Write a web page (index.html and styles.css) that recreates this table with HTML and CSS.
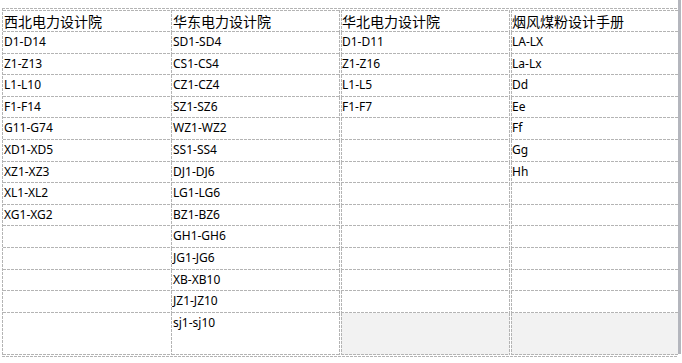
FILE: index.html
```html
<!DOCTYPE html>
<html lang="zh">
<head>
<meta charset="utf-8">
<title>编号表</title>
<link rel="stylesheet" href="styles.css">
</head>
<body>
<div class="page">
  <div class="sheet">
    <div class="grid">
      <div class="cell head c1">西北电力设计院</div>
      <div class="cell head c2">华东电力设计院</div>
      <div class="cell head c3">华北电力设计院</div>
      <div class="cell head c4">烟风煤粉设计手册</div>

      <div class="cell c1">D1-D14</div><div class="cell c2">SD1-SD4</div><div class="cell c3">D1-D11</div><div class="cell c4">LA-LX</div>
      <div class="cell c1">Z1-Z13</div><div class="cell c2">CS1-CS4</div><div class="cell c3">Z1-Z16</div><div class="cell c4">La-Lx</div>
      <div class="cell c1">L1-L10</div><div class="cell c2">CZ1-CZ4</div><div class="cell c3">L1-L5</div><div class="cell c4">Dd</div>
      <div class="cell c1">F1-F14</div><div class="cell c2">SZ1-SZ6</div><div class="cell c3">F1-F7</div><div class="cell c4">Ee</div>
      <div class="cell c1">G11-G74</div><div class="cell c2">WZ1-WZ2</div><div class="cell c3"></div><div class="cell c4">Ff</div>
      <div class="cell c1">XD1-XD5</div><div class="cell c2">SS1-SS4</div><div class="cell c3"></div><div class="cell c4">Gg</div>
      <div class="cell c1">XZ1-XZ3</div><div class="cell c2">DJ1-DJ6</div><div class="cell c3"></div><div class="cell c4">Hh</div>
      <div class="cell c1">XL1-XL2</div><div class="cell c2">LG1-LG6</div><div class="cell c3"></div><div class="cell c4"></div>
      <div class="cell c1">XG1-XG2</div><div class="cell c2">BZ1-BZ6</div><div class="cell c3"></div><div class="cell c4"></div>
      <div class="cell c1"></div><div class="cell c2">GH1-GH6</div><div class="cell c3"></div><div class="cell c4"></div>
      <div class="cell c1"></div><div class="cell c2">JG1-JG6</div><div class="cell c3"></div><div class="cell c4"></div>
      <div class="cell c1"></div><div class="cell c2">XB-XB10</div><div class="cell c3"></div><div class="cell c4"></div>
      <div class="cell c1"></div><div class="cell c2">JZ1-JZ10</div><div class="cell c3"></div><div class="cell c4"></div>
      <div class="cell c1"></div><div class="cell c2">sj1-sj10</div><div class="cell c3 shade"></div><div class="cell c4 shade"></div>
    </div>
  </div>
  <div class="edge"></div>
</div>
</body>
</html>
```
FILE: styles.css
```css
* { box-sizing: border-box; }
html, body { margin: 0; padding: 0; background: #fff; }
:root {
  --h: repeating-linear-gradient(to right, #b4b4b4 0 3px, transparent 3px 4px);
  --v: repeating-linear-gradient(to bottom, #b4b4b4 0 3px, transparent 3px 4px);
}
body {
  font-family: "Noto Sans", "Noto Sans CJK SC", sans-serif;
  font-size: 12px;
  color: #000;
}
.page {
  display: flex;
  align-items: flex-start;
  width: 682px;
  height: 363px;
}
.sheet {
  margin: 8px 0 0 2px;
  padding: 2px 0 2px 1px;
  background:
    var(--h) left top / 100% 1px no-repeat,
    var(--h) left bottom / 100% 1px no-repeat,
    var(--v) left top / 1px 100% no-repeat;
}
.grid {
  display: grid;
  grid-template-columns: 169px 168px 170px 168px;
  grid-template-rows: 22px repeat(13, 21.6px) 42px;
}
.cell {
  padding: 0 0 0 1px;
  line-height: 20px;
  white-space: nowrap;
  overflow: hidden;
  background:
    var(--h) left bottom / 100% 1px no-repeat,
    var(--v) right top / 1px 100% no-repeat;
}
.cell.head {
  padding-top: 1px;
  font-family: "Noto Sans CJK SC", sans-serif;
  font-size: 14px;
  line-height: 20px;
  background:
    var(--h) left top / 100% 1px no-repeat,
    var(--h) left bottom / 100% 1px no-repeat,
    var(--v) right top / 1px 100% no-repeat;
}
.cell.c3 {
  margin-left: 1px;
  background:
    var(--h) left bottom / 100% 1px no-repeat,
    var(--v) right top / 1px 100% no-repeat,
    var(--v) left top / 1px 100% no-repeat;
}
.cell.head.c3 {
  background:
    var(--h) left top / 100% 1px no-repeat,
    var(--h) left bottom / 100% 1px no-repeat,
    var(--v) right top / 1px 100% no-repeat,
    var(--v) left top / 1px 100% no-repeat;
}
.cell.c4 {
  margin-left: 1px;
  background:
    var(--h) left bottom / 100% 1px no-repeat,
    var(--v) left top / 1px 100% no-repeat;
}
.cell.head.c4 {
  background:
    var(--h) left top / 100% 1px no-repeat,
    var(--h) left bottom / 100% 1px no-repeat,
    var(--v) left top / 1px 100% no-repeat;
}
.grid .cell.shade { background-color: #f2f2f2; }
.edge {
  width: 3px;
  height: 354px;
  background: #b4b6bd;
}
```
